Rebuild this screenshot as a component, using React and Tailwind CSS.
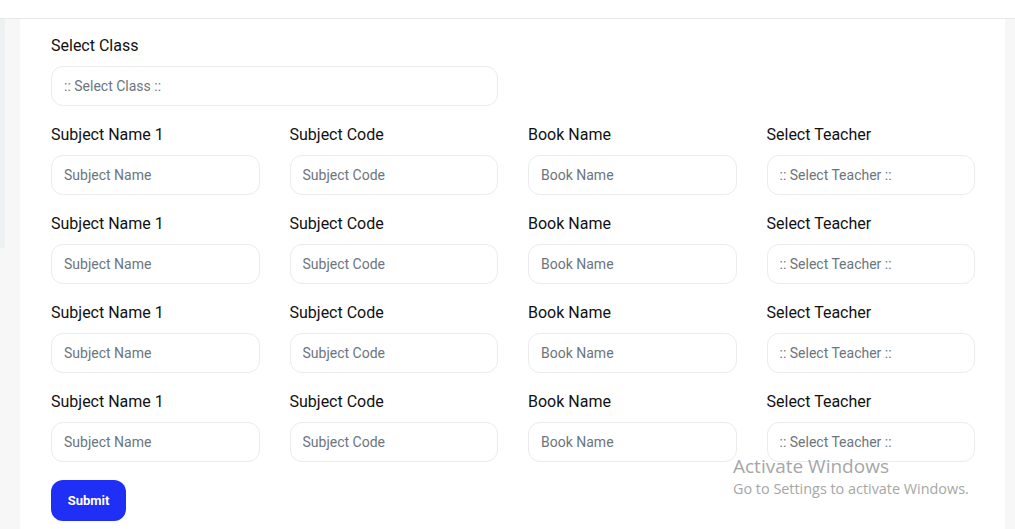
import React from "react";

const rows = [1, 2, 3, 4];

const Field = ({ label, placeholder, wide }) => (
  <div className={wide ? "col-span-2 flex flex-col" : "flex flex-col"}>
    <label className="text-[16px] leading-6 text-[#111111] mb-2">{label}</label>
    <input
      type="text"
      placeholder={placeholder}
      className="h-10 w-full rounded-xl border border-[#ebebeb] bg-white px-3 text-[14px] text-[#212529] placeholder:text-[#6c757d] outline-none"
    />
  </div>
);

const App = () => {
  return (
    <div className="min-h-screen bg-[#f7f7f7] font-['Roboto',sans-serif] overflow-hidden">
      {/* Top bar */}
      <div className="h-[19px] bg-white border-b border-[#e8e8e8]" />

      <div className="flex">
        {/* Left strip */}
        <div className="w-[5px] h-[229px] bg-[#edf1f2]" />
        <div className="w-[15px]" />

        {/* Card */}
        <div className="relative flex-1 bg-white pt-[15px] pl-[31px] pr-[30px] pb-[20px]">
          <div className="grid grid-cols-4 gap-x-[30px] gap-y-[17px]">
            <Field label="Select Class" placeholder=":: Select Class ::" wide />
            <div className="col-span-2" />
            {rows.map((r) => (
              <React.Fragment key={r}>
                <Field label="Subject Name 1" placeholder="Subject Name" />
                <Field label="Subject Code" placeholder="Subject Code" />
                <Field label="Book Name" placeholder="Book Name" />
                <Field label="Select Teacher" placeholder=":: Select Teacher ::" />
              </React.Fragment>
            ))}
          </div>

          <button className="mt-[18px] h-[41px] w-[75px] rounded-xl bg-[#1f2ff5] text-[13px] font-bold text-white">
            Submit
          </button>

          {/* Windows watermark */}
          <div className="pointer-events-none absolute left-[713px] top-[435px] font-['Open_Sans',sans-serif] text-[#a6a6a6]">
            <div className="text-[19px] leading-6">Activate Windows</div>
            <div className="text-[14.4px] leading-5 mt-[1px]">Go to Settings to activate Windows.</div>
          </div>
        </div>

        <div className="w-[10px]" />
      </div>
    </div>
  );
};

export default App;
